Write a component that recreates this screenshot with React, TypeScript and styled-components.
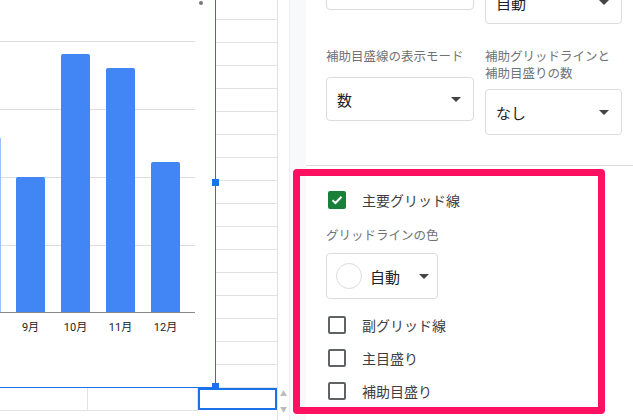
import styled, { createGlobalStyle } from "styled-components";

const Global = createGlobalStyle`
  body { margin: 0; font-family: Roboto, "Noto Sans CJK JP", sans-serif; }
`;

const Page = styled.div`
  width: 633px;
  height: 420px;
  display: flex;
  overflow: hidden;
  background: #fff;
`;

const Sheet = styled.div`
  width: 277px;
  height: 420px;
  position: relative;
  background-color: #fff;
  background-image: repeating-linear-gradient(to bottom, transparent 0 19px, #e2e2e2 19px 20px, transparent 20px 23px);
  border-right: 1px solid #e2e2e2;
`;

const ChartBox = styled.div`
  position: absolute;
  left: 0;
  top: 0;
  width: 215px;
  height: 387px;
  background: #fff;
  border-right: 1px solid #1a73e8;
  border-bottom: 1px solid #1a73e8;
`;

const Plot = styled.div`
  position: absolute;
  left: 0;
  top: 41px;
  width: 195px;
  height: 272px;
  border-bottom: 1px solid #888;
  background-image: repeating-linear-gradient(to bottom, #ddd 0 1px, transparent 1px 68px);
  display: flex;
  align-items: flex-end;
  gap: 16px;
  padding-left: 16px;
  box-sizing: border-box;
`;

const Bar = styled.div<{ h: number }>`
  width: 29px;
  height: ${(p) => p.h}px;
  background: #4285f4;
  border-radius: 2px 2px 0 0;
`;

const Edge = styled.div`
  position: absolute;
  left: 0;
  bottom: 0;
  width: 1px;
  height: 174px;
  background: #9cc0fa;
`;

const Labels = styled.div`
  position: absolute;
  left: 16px;
  top: 318px;
  display: flex;
  gap: 16px;
`;

const Label = styled.div`
  width: 29px;
  text-align: center;
  font-size: 11px;
  color: #222;
`;

const Handle = styled.div<{ t: number }>`
  position: absolute;
  left: 212px;
  top: ${(p) => p.t}px;
  width: 7px;
  height: 7px;
  background: #1a73e8;
`;

const Dot = styled.div`
  position: absolute;
  left: 199px;
  top: 1px;
  width: 4px;
  height: 4px;
  border-radius: 50%;
  background: #777;
`;

const BottomRow = styled.div`
  position: absolute;
  left: 0;
  top: 388px;
  width: 277px;
  height: 32px;
  background: #fff;
  display: grid;
  grid-template-columns: 88px 110px 79px;
  & > div { border-right: 1px solid #e2e2e2; border-bottom: 1px solid #e2e2e2; height: 22px; }
`;

const SelectedCell = styled.div`
  border: 2px solid #1a73e8 !important;
  box-sizing: border-box;
`;

const Scroll = styled.div`
  width: 12px;
  height: 420px;
  background: #fff;
  display: flex;
  flex-direction: column;
  justify-content: flex-end;
  align-items: center;
  padding-bottom: 6px;
  box-sizing: border-box;
  gap: 6px;
  color: #bbb;
  font-size: 7px;
  border-right: 1px solid #eee;
`;

const Strip = styled.div`
  width: 16px;
  background: #f8f9fa;
`;

const Panel = styled.div`
  flex: 1;
  position: relative;
  color: #3c4043;
`;

const Upper = styled.div`
  padding: 0 12px 0 20px;
  height: 165px;
  border-bottom: 1px solid #dadce0;
  position: relative;
`;

const Select = styled.div<{ w: number; top: number; h?: number }>`
  position: absolute;
  top: ${(p) => p.top}px;
  width: ${(p) => p.w}px;
  height: ${(p) => p.h ?? 44}px;
  border: 1px solid #dadce0;
  border-radius: 4px;
  box-sizing: border-box;
  display: flex;
  align-items: center;
  justify-content: space-between;
  padding: 0 12px 0 10px;
  font-size: 15px;
  color: #202124;
`;

const Caret = styled.span`
  width: 0;
  height: 0;
  border-left: 5px solid transparent;
  border-right: 5px solid transparent;
  border-top: 5px solid #444;
`;

const FieldLabel = styled.div<{ left: number; top: number }>`
  position: absolute;
  left: ${(p) => p.left}px;
  top: ${(p) => p.top}px;
  font-size: 12.5px;
  line-height: 17px;
  color: #6f7378;
`;

const Highlight = styled.div`
  position: absolute;
  left: -13px;
  top: 169px;
  width: 312px;
  height: 245px;
  border: 7px solid #ff1060;
  border-radius: 4px;
  box-sizing: border-box;
  padding: 14px 0 0 28px;
  display: flex;
  flex-direction: column;
  & > * { flex-shrink: 0; }
`;

const CheckRow = styled.div`
  display: flex;
  align-items: center;
  gap: 16px;
  height: 20px;
  font-size: 14px;
  color: #3c4043;
  margin-bottom: 13px;
`;

const Box = styled.span<{ on?: boolean }>`
  width: 18px;
  height: 18px;
  box-sizing: border-box;
  border-radius: 2px;
  border: 2px solid ${(p) => (p.on ? "#188038" : "#5f6368")};
  background: ${(p) => (p.on ? "#188038" : "#fff")};
  display: flex;
  align-items: center;
  justify-content: center;
`;

const ColorLabel = styled.div`
  font-size: 12.5px;
  color: #6f7378;
  margin: 2px 0 9px -2px;
`;

const ColorButton = styled.div`
  width: 112px;
  height: 46px;
  margin-left: -2px;
  border: 1px solid #dadce0;
  border-radius: 4px;
  box-sizing: border-box;
  display: flex;
  align-items: center;
  padding-left: 9px;
  gap: 7px;
  font-size: 15px;
  color: #202124;
  margin-bottom: 16px;
`;

const Swatch = styled.span`
  width: 24px;
  height: 24px;
  border-radius: 50%;
  border: 1px solid #dadce0;
  margin-right: 1px;
`;

const months = ["9月", "10月", "11月", "12月"];
const heights = [135, 258, 244, 150];

function Check({ on, label }: { on?: boolean; label: string }) {
  return (
    <CheckRow>
      <Box on={on}>
        {on && (
          <svg width="12" height="12" viewBox="0 0 12 12">
            <path d="M1.5 6.2 4.5 9 10.5 2.8" stroke="#fff" strokeWidth="2" fill="none" />
          </svg>
        )}
      </Box>
      {label}
    </CheckRow>
  );
}

export default function App() {
  return (
    <Page>
      <Global />
      <Sheet>
        <ChartBox>
          <Dot />
          <Plot>
            <Edge />
            {heights.map((h, i) => (
              <Bar key={i} h={h} />
            ))}
          </Plot>
          <Labels>
            {months.map((m) => (
              <Label key={m}>{m}</Label>
            ))}
          </Labels>
        </ChartBox>
        <Handle t={179} />
        <Handle t={383} />
        <BottomRow>
          <div />
          <div />
          <SelectedCell />
        </BottomRow>
      </Sheet>
      <Scroll>
        <span>▲</span>
        <span>▼</span>
      </Scroll>
      <Strip />
      <Panel>
        <Upper>
          <Select w={148} top={-34} style={{ left: 20 }} />
          <Select w={137} top={-20} style={{ left: 179 }}>
            自動 <Caret />
          </Select>
          <FieldLabel left={20} top={48}>補助目盛線の表示モード</FieldLabel>
          <FieldLabel left={179} top={48}>
            補助グリッドラインと
            <br />
            補助目盛りの数
          </FieldLabel>
          <Select w={148} top={77} style={{ left: 20 }}>
            数 <Caret />
          </Select>
          <Select w={137} top={89} h={46} style={{ left: 179 }}>
            なし <Caret />
          </Select>
        </Upper>
        <Highlight>
          <Check on label="主要グリッド線" />
          <ColorLabel>グリッドラインの色</ColorLabel>
          <ColorButton>
            <Swatch />
            自動
            <Caret style={{ marginLeft: 12 }} />
          </ColorButton>
          <Check label="副グリッド線" />
          <Check label="主目盛り" />
          <Check label="補助目盛り" />
        </Highlight>
      </Panel>
    </Page>
  );
}
